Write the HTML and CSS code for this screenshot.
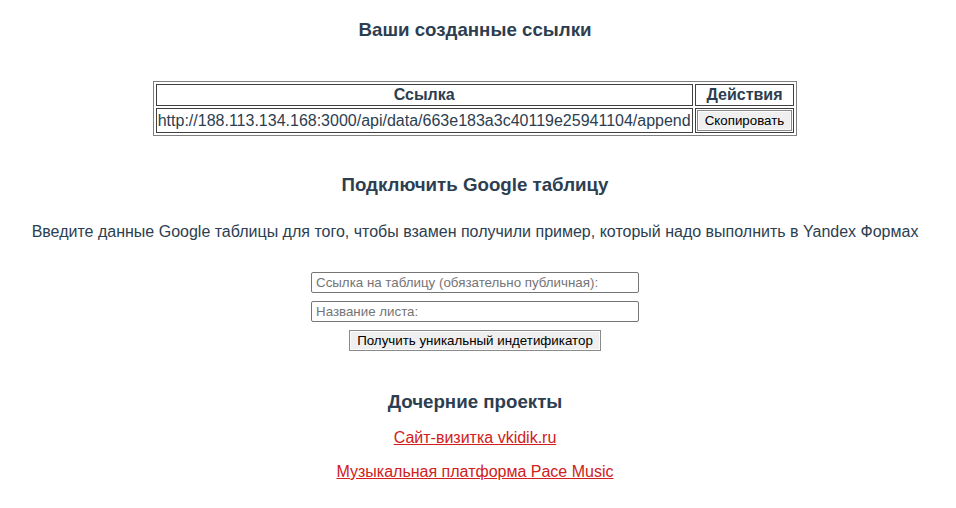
FILE: index.html
```html
<!DOCTYPE html>
<html lang="ru">
<head>
<meta charset="utf-8">
<title>Ссылки</title>
<link rel="stylesheet" href="styles.css">
</head>
<body>
<div class="app">
  <h3 class="title first">Ваши созданные ссылки</h3>
  <table class="links" border="1">
    <thead>
      <tr><th>Ссылка</th><th>Действия</th></tr>
    </thead>
    <tbody>
      <tr>
        <td>http://188.113.134.168:3000/api/data/663e183a3c40119e25941104/append</td>
        <td><button class="btn">Скопировать</button></td>
      </tr>
    </tbody>
  </table>

  <h3 class="title second">Подключить Google таблицу</h3>
  <p class="desc">Введите данные Google таблицы для того, чтобы взамен получили пример, который надо выполнить в Yandex Формах</p>
  <form class="form">
    <input class="field" type="text" placeholder="Ссылка на таблицу (обязательно публичная):">
    <input class="field" type="text" placeholder="Название листа:">
    <button class="btn" type="button">Получить уникальный индетификатор</button>
  </form>

  <h3 class="title third">Дочерние проекты</h3>
  <a class="link first-link" href="#">Сайт-визитка vkidik.ru</a>
  <a class="link" href="#">Музыкальная платформа Pace Music</a>
</div>
</body>
</html>
```

FILE: styles.css
```css
html, body {
  margin: 0;
  padding: 0;
  background: #ffffff;
}

.app {
  font-family: "Liberation Sans", Arial, Helvetica, sans-serif;
  color: #2c3e50;
  text-align: center;
  display: flex;
  flex-direction: column;
  align-items: center;
  padding-top: 19px;
  padding-right: 6px;
}

.title {
  font-size: 18.72px;
  font-weight: bold;
  margin: 0;
  line-height: 22px;
}

.first { margin-bottom: 40px; }
.second { margin-top: 38px; }
.third { margin-top: 40px; }

.links {
  border-collapse: separate;
  border-spacing: 2px;
  border: 1px solid #808080;
  color: #000;
  font-size: 16px;
}

.links th, .links td {
  border: 1px solid #404040;
  padding: 1px;
  line-height: 18px;
}

.links th {
  font-weight: bold;
  color: #2c3e50;
}

.links td {
  text-align: left;
  color: #2c3e50;
}

.btn {
  font-family: "Liberation Sans", Arial, sans-serif;
  font-size: 13.33px;
  color: #000;
  background: #efefef;
  border: 1px solid #8a8a8a;
  box-shadow: inset 0 0 0 1px #fbfbfb;
  border-radius: 0;
  padding: 2px 7px;
  margin: 0;
  line-height: 15px;
}

.desc {
  font-size: 16px;
  margin: 27px 0 0 0;
  line-height: 18px;
}

.form {
  margin-top: 31px;
  display: flex;
  flex-direction: column;
  align-items: center;
  gap: 8px;
}

.field {
  width: 328px;
  height: 21px;
  box-sizing: border-box;
  border: 1px solid #767676;
  border-radius: 2px;
  padding: 1px 4px;
  font-family: "Liberation Sans", Arial, sans-serif;
  font-size: 13.33px;
  color: #000;
}

.field::placeholder {
  color: #757575;
}

.link {
  font-size: 16px;
  color: #d02020;
  text-decoration: underline;
  line-height: 18px;
  margin-top: 16px;
}

.first-link {
  margin-top: 16px;
}
```
